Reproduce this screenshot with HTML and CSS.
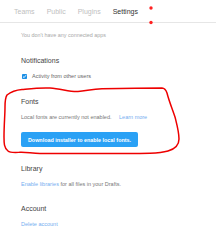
FILE: index.html
```html
<!DOCTYPE html>
<html>
<head>
<meta charset="utf-8">
<link rel="stylesheet" href="styles.css">
</head>
<body>
<div class="page">
  <nav class="tabs">
    <span class="tab">Teams</span>
    <span class="tab">Public</span>
    <span class="tab">Plugins</span>
    <span class="tab active">Settings</span>
  </nav>
  <main class="content">
    <p class="empty">You don't have any connected apps</p>
    <section class="section">
      <h2 class="heading">Notifications</h2>
      <label class="check-row">
        <span class="checkbox"><svg width="5" height="5" viewBox="0 0 5 5"><path d="M1 2.6 L2.1 3.6 L4 1.2" fill="none" stroke="#fff" stroke-width="0.9"/></svg></span>
        <span class="text dark">Activity from other users</span>
      </label>
    </section>
    <section class="section">
      <h2 class="heading">Fonts</h2>
      <p class="text">Local fonts are currently not enabled. <a class="link learn">Learn more</a></p>
      <button class="btn">Download installer to enable local fonts.</button>
    </section>
    <section class="section lib">
      <h2 class="heading">Library</h2>
      <p class="text"><a class="link">Enable libraries</a> for all files in your Drafts.</p>
    </section>
    <section class="section acct">
      <h2 class="heading">Account</h2>
      <p class="text"><a class="link">Delete account</a></p>
    </section>
  </main>
  <svg class="annot" width="216" height="233" viewBox="0 0 216 233">
    <circle cx="151" cy="8" r="1.7" fill="#f22"/>
    <circle cx="151" cy="22.5" r="1.7" fill="#f22"/>
    <path d="M7 95 C12 91 16 90 22 89.5 C32 88.5 40 87.5 50 88 C62 89 70 92 78 91.5 C86 91 92 89 102 88.8 C125 88.3 145 88 162 88 C165 88.2 166 90 167 93 C169 101 172 108 175 117 C177 125 179 132 179 139 C179 146 175 149 168 151 C163 152.5 158 153 150 153.2 C120 153.8 80 153.6 40 153.4 C32 153.3 26 152 20 152.3 C14 152.6 10 153 8 151 C4 148 4 143 4 137 C4 125 5 115 5 107 C5 101 5 98 7 95 Z" fill="none" stroke="#e00" stroke-width="1.5" stroke-linejoin="round"/>
  </svg>
</div>
</body>
</html>
```

FILE: styles.css
```css
html, body {
  margin: 0;
  padding: 0;
  background: #fff;
}
.page {
  position: relative;
  width: 216px;
  height: 233px;
  overflow: hidden;
  font-family: "Liberation Sans", Arial, sans-serif;
}
.tabs {
  display: flex;
  gap: 12px;
  height: 22px;
  align-items: center;
  padding-left: 14px;
  border-bottom: 1px solid #e6e6e6;
  box-sizing: content-box;
}
.tab {
  font-size: 7px;
  line-height: 10px;
  color: #c0c0c0;
  padding-top: 1px;
}
.tab.active {
  color: #333;
}
.content {
  padding-left: 21px;
  display: flex;
  flex-direction: column;
}
.empty {
  margin: 7px 0 0;
  font-size: 5.4px;
  line-height: 10px;
  color: #a8a8a8;
}
.section {
  display: flex;
  flex-direction: column;
  align-items: flex-start;
  gap: 5px;
  margin-top: 16px;
}
.section.lib {
  margin-top: 17px;
}
.section.acct {
  margin-top: 15px;
}
.heading {
  margin: 0;
  font-size: 7px;
  line-height: 10px;
  font-weight: normal;
  color: #444;
}
.check-row {
  display: flex;
  align-items: center;
  gap: 5px;
  height: 10px;
  margin-left: 1px;
}
.checkbox {
  width: 5px;
  height: 5px;
  background: #1b8fe6;
  border-radius: 0.8px;
  display: flex;
}
.text {
  margin: 0;
  font-size: 5.5px;
  line-height: 10px;
  color: #777;
}
.text.dark {
  color: #666;
}
.link {
  color: #74aef0;
}
.learn {
  margin-left: 6px;
}
.btn {
  margin-top: 5px;
  width: 117px;
  height: 15px;
  border: none;
  border-radius: 2px;
  background: #2aa1f5;
  color: #fff;
  font-family: "Liberation Sans", Arial, sans-serif;
  font-size: 5.4px;
  font-weight: bold;
  padding: 0;
}
.annot {
  position: absolute;
  left: 0;
  top: 0;
  pointer-events: none;
}
```
